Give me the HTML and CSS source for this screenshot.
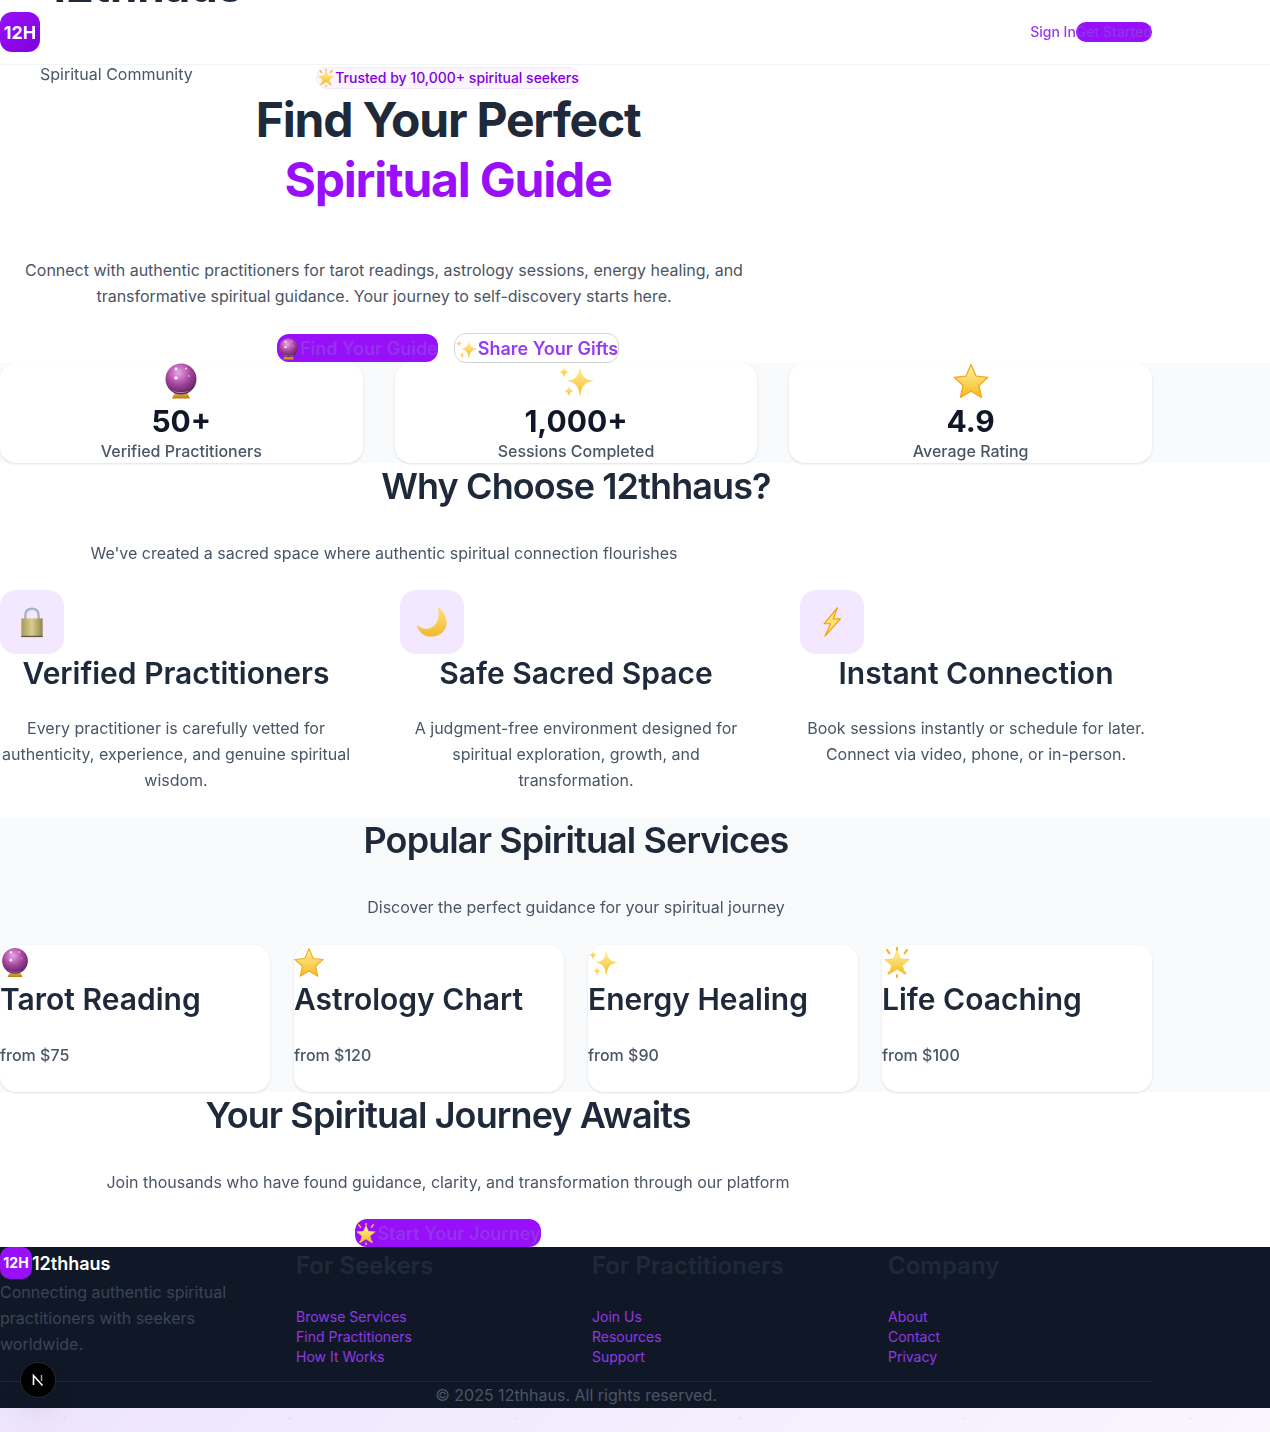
FILE: index.html
```html
<!DOCTYPE html>
<html lang="en">
<head>
<meta charset="utf-8">
<title>12thhaus</title>
<link rel="stylesheet" href="styles.css">
</head>
<body>
<svg class="defs" width="0" height="0" aria-hidden="true">
  <defs>
    <radialGradient id="ballG" cx="42%" cy="30%" r="75%"><stop offset="0" stop-color="#e9a6e6"/><stop offset=".5" stop-color="#a8479f"/><stop offset="1" stop-color="#4e1f57"/></radialGradient>
    <linearGradient id="goldG" x1="0" y1="0" x2="0" y2="1"><stop offset="0" stop-color="#f3c545"/><stop offset="1" stop-color="#b37a10"/></linearGradient>
    <linearGradient id="starG" x1="0" y1="0" x2="0" y2="1"><stop offset="0" stop-color="#fff3a8"/><stop offset="1" stop-color="#f8b91e"/></linearGradient>
    <linearGradient id="lockG" x1="0" y1="0" x2="1" y2="0"><stop offset="0" stop-color="#a89a58"/><stop offset=".5" stop-color="#d9cd8c"/><stop offset="1" stop-color="#8f8550"/></linearGradient>
    <linearGradient id="moonG" x1="0" y1="0" x2="0" y2="1"><stop offset="0" stop-color="#fbe27a"/><stop offset="1" stop-color="#f2b92c"/></linearGradient>
    <symbol id="i-ball" viewBox="0 0 36 36">
      <path d="M9 35.500 L12 29 H24 L27 35.500 Z" fill="url(#goldG)"/>
      <circle cx="18" cy="16" r="15.500" fill="url(#ballG)"/>
      <circle cx="13" cy="6" r="1.400" fill="#fff"/><circle cx="23" cy="5.500" r="1" fill="#fff" opacity=".8"/><circle cx="13" cy="15" r="1.800" fill="#fff" opacity=".9"/><circle cx="26" cy="13" r=".8" fill="#fff" opacity=".7"/>
      <path d="M9 27 C13 30 23 30 27 27 C24 31 12 31 9 27 Z" fill="#f0c9ee" opacity=".7"/>
    </symbol>
    <symbol id="i-star" viewBox="0 0 36 36">
      <path d="M18 1.500 L23 13.100 L35 14.300 L25.900 22.500 L28.600 34.500 L18 28.200 L7.400 34.500 L10.100 22.500 L1 14.300 L13 13.100 Z" fill="url(#starG)" stroke="#f2a81c" stroke-width="1.300" stroke-linejoin="round"/>
    </symbol>
    <symbol id="i-sparkles" viewBox="0 0 36 36">
      <path d="M22 3 C23.500 13 26 16.500 36 18 C26 19.500 23.500 23 22 34 C20.500 23 18 19.500 9 18 C18 16.500 20.500 13 22 3 Z" fill="url(#starG)"/>
      <path d="M6 3 C6.600 7 7.500 8.300 11 9 C7.500 9.700 6.600 11 6 15 C5.400 11 4.500 9.700 1 9 C4.500 8.300 5.400 7 6 3 Z" fill="url(#starG)"/>
      <path d="M11 22 C11.600 26 12.500 27.300 16 28 C12.500 28.700 11.600 30 11 34 C10.400 30 9.500 28.700 6 28 C9.500 27.300 10.400 26 11 22 Z" fill="url(#starG)"/>
    </symbol>
    <symbol id="i-glow" viewBox="0 0 36 36">
      <path d="M6 3 L9 7 M30 3 L27 7 M18 0.500 V3 M8 31 L10 29 M28 31 L26 29 M18 33 V35.500" stroke="#f7b52a" stroke-width="2.600" stroke-linecap="round"/>
      <path d="M18 4 L22 13.600 L33 14.500 L24.600 21.300 L27.200 32 L18 26.200 L8.800 32 L11.400 21.300 L3 14.500 L14 13.600 Z" fill="url(#starG)" stroke="#f9cf4a" stroke-width=".8" stroke-linejoin="round"/>
    </symbol>
    <symbol id="i-lock" viewBox="0 0 36 36">
      <path d="M10.500 17 V11 C10.500 5.500 13.500 3 18 3 C22.500 3 25.500 5.500 25.500 11 V17" fill="none" stroke="#a9b5c4" stroke-width="2.800"/>
      <rect x="6" y="14" width="24" height="20.500" fill="url(#lockG)"/>
      <rect x="6" y="33.500" width="24" height="1.500" fill="#5f5a35"/>
    </symbol>
    <symbol id="i-moon" viewBox="0 0 36 36">
      <path d="M24 1 C32 6 36 14 34 23 C31 32 21 36 12 34 C6 32 2 27 1 21 C6 26 13 27 18 24 C25 20 27 10 24 1 Z" fill="url(#moonG)"/>
    </symbol>
    <symbol id="i-bolt" viewBox="0 0 36 36">
      <path d="M24 2 L9 20 H16.500 L10 34 L27.500 14.500 H19.500 Z" fill="#fde272" stroke="#f59e0b" stroke-width="1.300" stroke-linejoin="round"/>
    </symbol>
  </defs>
</svg>

<header class="site-header">
  <div class="header-inner">
    <div class="brand">
      <div class="logo">12H</div>
      <div class="brand-text">
        <div class="brand-name">12thhaus</div>
        <div class="brand-tag">Spiritual Community</div>
      </div>
    </div>
    <nav class="nav">
      <a class="nav-link">Sign In</a>
      <a class="nav-cta">Get Started</a>
    </nav>
  </div>
</header>

<main>
  <section class="hero">
    <div class="hero-inner">
      <div class="pill-row">
        <span class="pill"><svg class="pill-icon"><use href="#i-glow"/></svg>Trusted by 10,000+ spiritual seekers</span>
      </div>
      <h1 class="hero-title">Find Your Perfect<span class="hero-accent">Spiritual Guide</span></h1>
      <p class="hero-text">Connect with authentic practitioners for tarot readings, astrology sessions, energy healing, and transformative spiritual guidance. Your journey to self-discovery starts here.</p>
      <div class="hero-actions">
        <a class="btn btn-primary"><svg class="btn-icon"><use href="#i-ball"/></svg>Find Your Guide</a>
        <a class="btn btn-outline"><svg class="btn-icon"><use href="#i-sparkles"/></svg>Share Your Gifts</a>
      </div>
    </div>
  </section>

  <section class="stats">
    <div class="container stats-grid">
      <div class="stat-card"><svg class="stat-icon"><use href="#i-ball"/></svg><div class="stat-num">50+</div><div class="stat-label">Verified Practitioners</div></div>
      <div class="stat-card"><svg class="stat-icon"><use href="#i-sparkles"/></svg><div class="stat-num">1,000+</div><div class="stat-label">Sessions Completed</div></div>
      <div class="stat-card"><svg class="stat-icon"><use href="#i-star"/></svg><div class="stat-num">4.9</div><div class="stat-label">Average Rating</div></div>
    </div>
  </section>

  <section class="why">
    <div class="container">
      <h2 class="section-title">Why Choose 12thhaus?</h2>
      <p class="section-sub">We've created a sacred space where authentic spiritual connection flourishes</p>
      <div class="why-grid">
        <div class="why-card"><div class="why-icon"><svg class="why-svg"><use href="#i-lock"/></svg></div><h3 class="card-title">Verified Practitioners</h3><p class="why-text">Every practitioner is carefully vetted for authenticity, experience, and genuine spiritual wisdom.</p></div>
        <div class="why-card"><div class="why-icon"><svg class="why-svg"><use href="#i-moon"/></svg></div><h3 class="card-title">Safe Sacred Space</h3><p class="why-text">A judgment-free environment designed for spiritual exploration, growth, and transformation.</p></div>
        <div class="why-card"><div class="why-icon"><svg class="why-svg"><use href="#i-bolt"/></svg></div><h3 class="card-title">Instant Connection</h3><p class="why-text">Book sessions instantly or schedule for later. Connect via video, phone, or in-person.</p></div>
      </div>
    </div>
  </section>

  <section class="services">
    <div class="container">
      <h2 class="section-title">Popular Spiritual Services</h2>
      <p class="services-sub">Discover the perfect guidance for your spiritual journey</p>
      <div class="service-grid">
        <div class="service-card"><svg class="service-icon"><use href="#i-ball"/></svg><h3 class="card-title">Tarot Reading</h3><p class="price">from $75</p></div>
        <div class="service-card"><svg class="service-icon"><use href="#i-star"/></svg><h3 class="card-title">Astrology Chart</h3><p class="price">from $120</p></div>
        <div class="service-card"><svg class="service-icon"><use href="#i-sparkles"/></svg><h3 class="card-title">Energy Healing</h3><p class="price">from $90</p></div>
        <div class="service-card"><svg class="service-icon"><use href="#i-glow"/></svg><h3 class="card-title">Life Coaching</h3><p class="price">from $100</p></div>
      </div>
    </div>
  </section>

  <section class="cta">
    <h2 class="section-title">Your Spiritual Journey Awaits</h2>
    <p class="cta-text">Join thousands who have found guidance, clarity, and transformation through our platform</p>
    <div class="cta-actions"><a class="btn btn-primary"><svg class="btn-icon"><use href="#i-glow"/></svg>Start Your Journey</a></div>
  </section>
</main>

<footer class="footer">
  <div class="container">
    <div class="footer-grid">
      <div>
        <div class="footer-brand"><div class="footer-logo">12H</div><span class="footer-name">12thhaus</span></div>
        <p class="footer-about">Connecting authentic spiritual practitioners with seekers worldwide.</p>
      </div>
      <div><h4 class="footer-head">For Seekers</h4><ul class="footer-links"><li>Browse Services</li><li>Find Practitioners</li><li>How It Works</li></ul></div>
      <div><h4 class="footer-head">For Practitioners</h4><ul class="footer-links"><li>Join Us</li><li>Resources</li><li>Support</li></ul></div>
      <div><h4 class="footer-head">Company</h4><ul class="footer-links"><li>About</li><li>Contact</li><li>Privacy</li></ul></div>
    </div>
    <div class="footer-bottom">© 2025 12thhaus. All rights reserved.</div>
  </div>
</footer>

<div class="dev-badge"><svg class="dev-n" viewBox="0 0 16 16"><path d="M3.500 13 V3.500 L12.500 13.500" fill="none" stroke="#fff" stroke-width="1.600"/><path d="M11.500 3 V9" stroke="#aaa" stroke-width="1.400"/></svg></div>
</body>
</html>
```
FILE: styles.css
```css
* { box-sizing: border-box; }
html, body { margin: 0; padding: 0; }
body {
  position: relative;
  min-height: 1432px;
  font-family: Inter, "Liberation Sans", sans-serif;
  font-size: 16px;
  line-height: 26px;
  color: #4a5565;
  background:
    radial-gradient(circle, rgba(147, 51, 234, .07) 1px, transparent 1.5px) -47.5px 181px / 225px 225px,
    radial-gradient(circle, rgba(147, 51, 234, .07) 1px, transparent 1.5px) 75.5px 170px / 225px 225px,
    linear-gradient(135deg, #faf5ff 0%, #ede4fd 50%, #faf5ff 100%);
}
h1, h2, h3, h4, p, ul { margin: 0; padding: 0; }
.defs { position: absolute; }
.container { width: 1152px; }
.site-header, main, .footer { will-change: opacity; }

.site-header { position: relative; z-index: 1; height: 65px; background: #fff; border-bottom: 1px solid #f3f4f6; }
.header-inner { width: 1152px; height: 64px; display: flex; align-items: center; justify-content: space-between; }
.brand { display: flex; align-items: center; }
.logo {
  width: 40px; height: 40px; border-radius: 12px; padding-top: 1px;
  display: flex; align-items: center; justify-content: center;
  background: linear-gradient(135deg, #9810fa, #8200db);
  color: #fff; font-size: 18px; font-weight: 700;
}
.brand-text { height: 0; display: flex; flex-direction: column; justify-content: flex-end; }
.brand-name { font-size: 44px; line-height: 48px; font-weight: 700; color: #1e2939; margin-left: 7px; }
.brand-tag { font-size: 16px; line-height: 24px; color: #4a5565; margin-bottom: -54px; margin-top: 52px; }
.nav { display: flex; align-items: center; }
.nav-link { font-size: 14px; line-height: 20px; font-weight: 500; color: #9a3aee; }
.nav-cta { font-size: 14px; line-height: 20px; font-weight: 500; color: #9333ea; background: #9810fa; border-radius: 10px; }

.hero { height: 298px; background: #fff; }
.hero-inner { width: 896px; text-align: center; }
.pill-row { padding-top: 2px; height: 24px; }
.pill {
  display: inline-flex; align-items: center; height: 22px;
  background: #faf5ff; border: 1px solid #f3e8ff; border-radius: 11px;
  font-size: 14px; line-height: 20px; font-weight: 500; color: #8200db;
}
.pill-icon { width: 18px; height: 18px; }
.hero-title { margin-top: 1px; font-size: 48px; line-height: 60px; font-weight: 700; color: #1e2939; letter-spacing: -1.2px; }
.hero-accent { display: block; color: #9810fa; }
.hero-text { width: 768px; margin-top: 47px; }
.hero-actions { margin-top: 24px; display: flex; justify-content: center; align-items: center; gap: 16px; }
.btn { display: inline-flex; align-items: center; height: 28px; padding-top: 2px; font-size: 18px; line-height: 26px; font-weight: 600; border-radius: 12px; }
.btn-primary { background: #9810fa; color: #9333ea; }
.btn-outline { height: 30px; background: #fff; color: #9a3aee; border: 1px solid #d1d5db; }
.btn-icon { width: 22px; height: 22px; }
.hero-actions .btn-icon { width: 23px; }

.stats { background: #f9fafb; height: 100px; }
.stats-grid { display: grid; grid-template-columns: repeat(3, 1fr); gap: 32px; }
.stat-card {
  height: 100px; background: #fff; border-radius: 16px; text-align: center;
  box-shadow: 0 1px 3px rgba(0,0,0,.1), 0 1px 2px -1px rgba(0,0,0,.1);
}
.stat-icon { display: block; margin: 0 auto 4px; width: 36px; height: 36px; }
.stat-num { font-size: 30px; line-height: 36px; font-weight: 700; color: #101828; }
.stat-label { line-height: 24px; font-weight: 500; color: #4a5565; }

.why { height: 355px; background: #fff; padding-top: 1px; }
.section-title { font-size: 36px; line-height: 45px; font-weight: 600; color: #1e2939; text-align: center; letter-spacing: -0.9px; }
.section-sub { width: 768px; margin-top: 31px; text-align: center; color: #4a5565; }
.why-grid { margin-top: 24px; display: grid; grid-template-columns: repeat(3, 1fr); gap: 48px; }
.why-card { text-align: center; }
.why-icon { width: 64px; height: 64px; border-radius: 16px; background: #f3e8ff; display: flex; align-items: center; justify-content: center; }
.why-svg { width: 32px; height: 32px; }
.card-title { font-size: 30px; line-height: 38px; font-weight: 600; color: #1e2939; }
.why-text { margin-top: 23px; color: #4a5565; }

.services { height: 274px; background: #f9fafb; }
.services-sub { margin-top: 31px; text-align: center; color: #4a5565; }
.service-grid { margin-top: 25px; display: grid; grid-template-columns: repeat(4, 1fr); gap: 24px; }
.service-card { height: 147px; background: #fff; border-radius: 16px; box-shadow: 0 1px 3px rgba(0,0,0,.1), 0 1px 2px -1px rgba(0,0,0,.1); }
.service-icon { display: block; width: 30px; height: 35px; }
.price { margin-top: 24px; font-weight: 500; color: #4a5565; }

main { background: #fff; }
.cta { height: 155px; width: 896px; padding-top: 1px; }
.cta-text { margin-top: 31px; text-align: center; color: #4a5565; }
.cta-actions { margin-top: 24px; display: flex; justify-content: center; }

.footer { height: 161px; background: #101828; }
.footer-grid { display: grid; grid-template-columns: repeat(4, 1fr); gap: 32px; }
.footer-brand { display: flex; align-items: center; }
.footer-logo { width: 32px; height: 32px; border-radius: 10px; background: #9810fa; color: #fff; font-size: 14px; font-weight: 700; display: flex; align-items: center; justify-content: center; }
.footer-name { font-size: 18px; font-weight: 600; color: #fff; padding-top: 2px; }
.footer-about { color: #3a4556; }
.footer-head { padding-top: 1px; font-size: 24px; line-height: 36px; font-weight: 600; color: #1e2939; }
.footer-links { list-style: none; margin-top: 23px; font-size: 14px; line-height: 20px; color: #9238e0; }
.footer-bottom { margin-top: 14px; height: 27px; border-top: 1px solid #1e2939; text-align: center; color: #4a5565; }

.dev-badge {
  position: absolute; z-index: 2; left: 20px; top: 1362px; width: 36px; height: 36px; border-radius: 50%;
  background: #000; border: 1px solid #2a2a2a; display: flex; align-items: center; justify-content: center;
  box-shadow: 0 16px 32px -8px rgba(0,0,0,.24);
}
.dev-n { width: 16px; height: 16px; }
```
